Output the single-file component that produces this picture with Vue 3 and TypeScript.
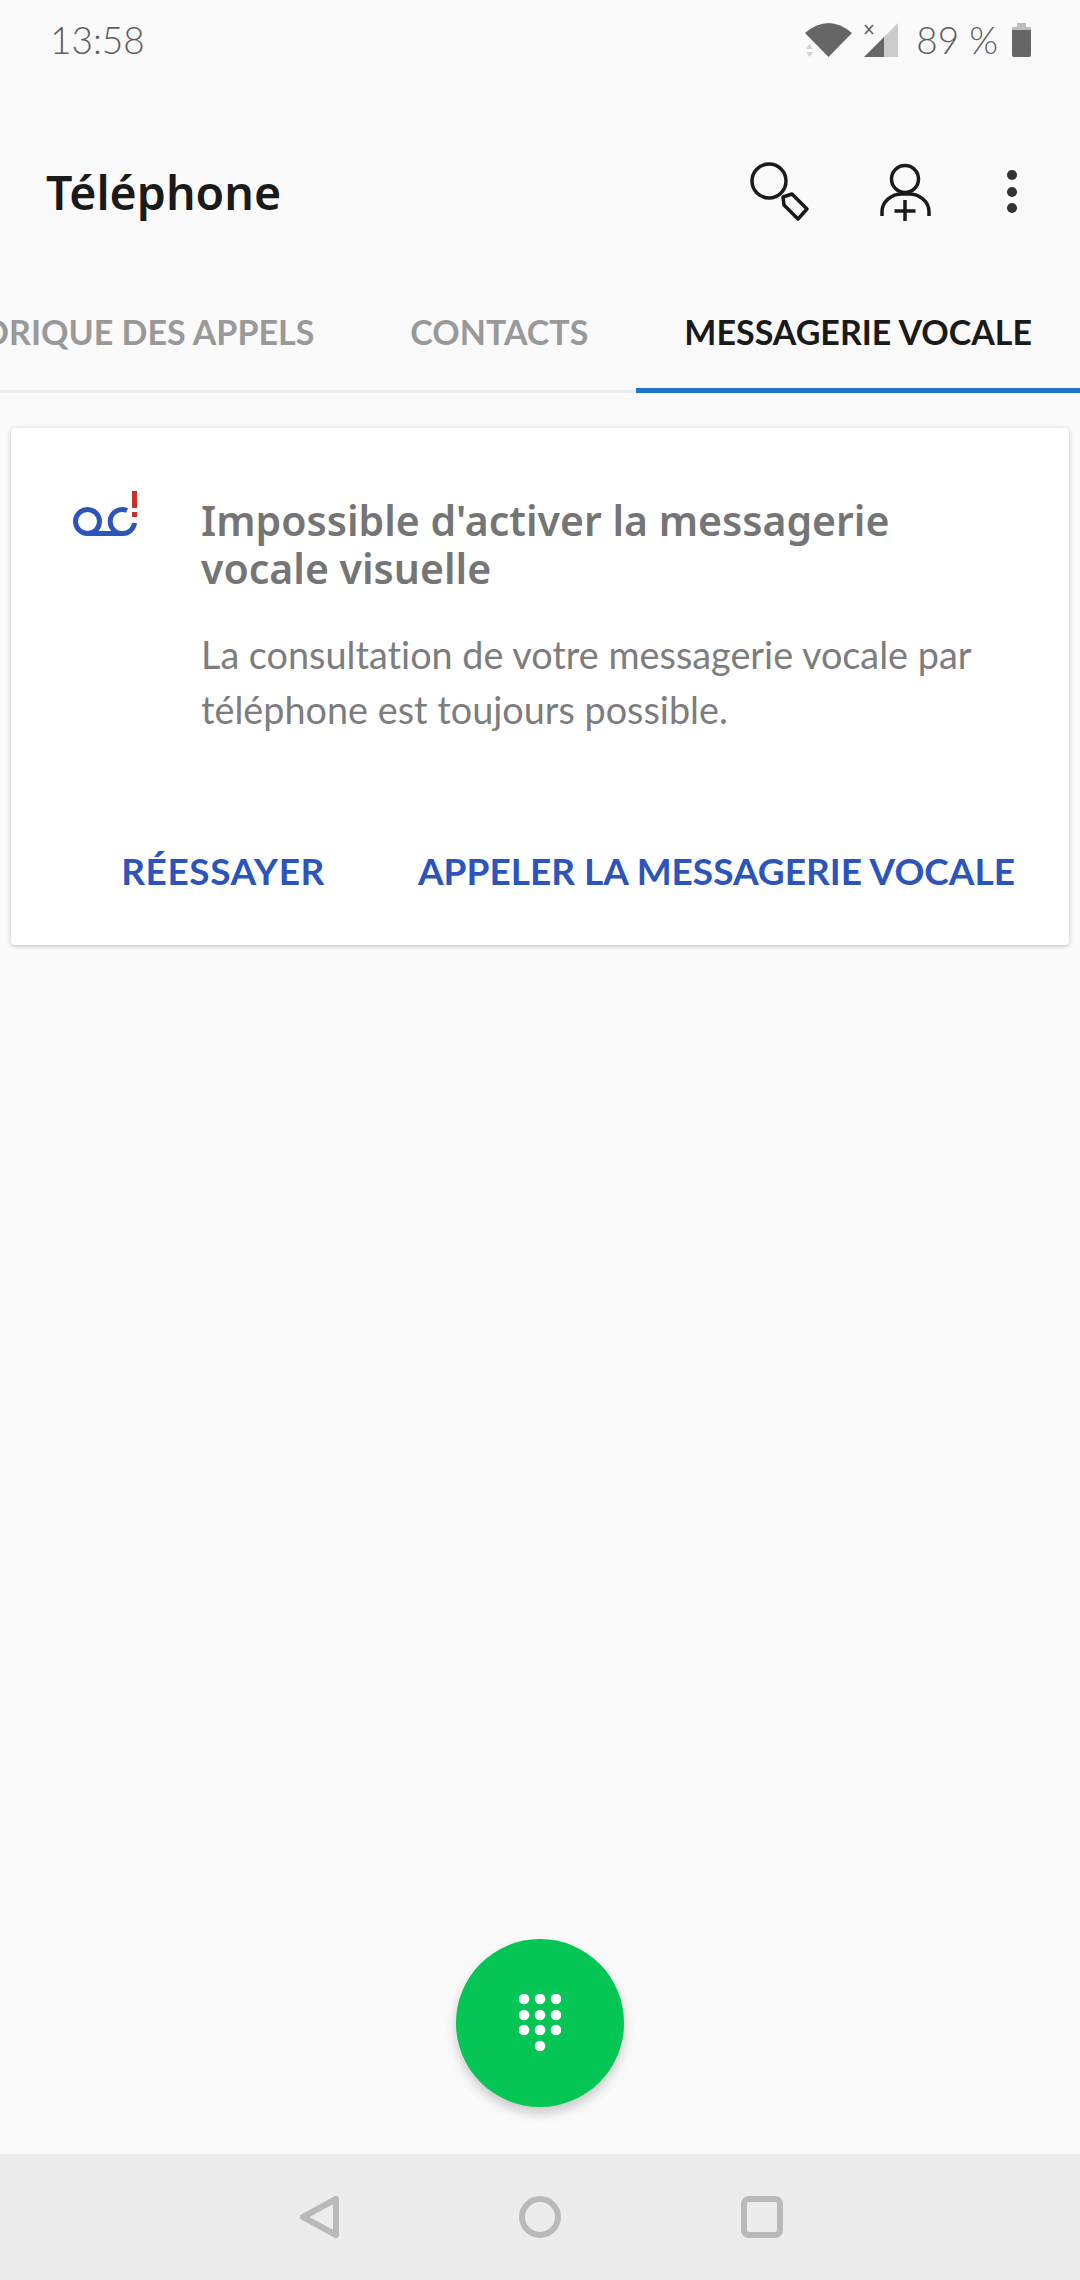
<script setup lang="ts">
const tabs = [
  { label: 'HISTORIQUE DES APPELS', active: false },
  { label: 'CONTACTS', active: false },
  { label: 'MESSAGERIE VOCALE', active: true },
]
const dialDots: [number, number][] = [
  [5, 5], [21, 5], [37, 5],
  [5, 21], [21, 21], [37, 21],
  [5, 36], [21, 36], [37, 36],
  [21, 52],
]
</script>

<template>
  <div class="phone">
    <div class="status">
      <span class="time">13:58</span>
      <div class="status-right">
        <svg width="47" height="34" viewBox="0 0 47 34">
          <path d="M0 10 Q23.500 -10 47 10 L23.500 34 Z" fill="#666" />
          <path d="M1 26 L4.500 21 L8 26 Z M1 29 L8 29 L4.500 34 Z" fill="#d4d4d4" />
        </svg>
        <svg class="ic-signal" width="34" height="34" viewBox="0 0 34 34">
          <path d="M34 0 V34 H20 V14 Z" fill="#cbcbcb" />
          <path d="M0 34 L20 14 V34 Z" fill="#666" />
          <path d="M1 2 L9 11 M9 2 L1 11" stroke="#666" stroke-width="1.800" fill="none" />
        </svg>
        <span class="batt-text">89 %</span>
        <svg width="19" height="34" viewBox="0 0 19 34">
          <path d="M5 0 H14 V4 H18 Q19 4 19 5 V7 H0 V5 Q0 4 1 4 H5 Z" fill="#bdbdbd" />
          <path d="M0 7 H19 V32 Q19 34 17 34 H2 Q0 34 0 32 Z" fill="#666" />
        </svg>
      </div>
    </div>

    <header class="toolbar">
      <h1 class="title">Téléphone</h1>
      <div class="actions">
        <svg class="ic-search" width="64" height="70" viewBox="0 0 64 70" fill="none" stroke="#1a1a1a" stroke-width="3.500">
          <circle cx="23" cy="24" r="17" />
          <path d="M37 40 L46 37 L61 52 L52 62 L38 48 Z" stroke-linejoin="round" />
        </svg>
        <svg class="ic-person" width="60" height="70" viewBox="0 0 60 70" fill="none" stroke="#1a1a1a" stroke-width="3.500">
          <circle cx="30" cy="22" r="13.500" />
          <path d="M7 59 V55 C7 44 17 37 27 37 H34 C44 37 54 44 54 55 V59" />
          <path d="M30 43 V64 M19.500 54 H40.500" />
        </svg>
        <svg class="ic-more" width="12" height="70" viewBox="0 0 12 70" fill="#333">
          <circle cx="6" cy="18" r="5" />
          <circle cx="6" cy="35" r="5" />
          <circle cx="6" cy="51" r="5" />
        </svg>
      </div>
    </header>

    <nav class="tabs">
      <div v-for="t in tabs" :key="t.label" class="tab" :class="{ active: t.active }">{{ t.label }}</div>
    </nav>

    <main class="content">
      <section class="card">
        <div class="card-row">
          <svg width="66" height="48" viewBox="0 0 66 48" fill="none">
            <circle cx="14.500" cy="30.500" r="12" stroke="#2b55bd" stroke-width="5" />
            <path d="M14.500 42.500 H49.500 M54 19.500 A12 12 0 1 0 49.500 42.500 A12 12 0 0 0 61.500 32" stroke="#2b55bd" stroke-width="5" />
            <rect x="59" y="0" width="5" height="17" fill="#c9302c" />
            <rect x="59" y="21" width="5" height="5" fill="#c9302c" />
          </svg>
          <div class="card-text">
            <h2>Impossible d'activer la messagerie vocale visuelle</h2>
            <p>La consultation de votre messagerie vocale par téléphone est toujours possible.</p>
          </div>
        </div>
        <div class="card-actions">
          <a class="retry">RÉESSAYER</a>
          <a>APPELER LA MESSAGERIE VOCALE</a>
        </div>
      </section>

      <button class="fab" aria-label="Clavier">
        <svg width="42" height="58" viewBox="0 0 42 58" fill="#fff">
          <circle v-for="(d, i) in dialDots" :key="i" :cx="d[0]" :cy="d[1]" r="5.300" />
        </svg>
      </button>
    </main>

    <footer class="navbar">
      <svg width="39" height="42" viewBox="0 0 39 42" fill="none" stroke="#b9b9b9" stroke-width="6" stroke-linejoin="round">
        <path d="M3 21 L36 3 V39 Z" />
      </svg>
      <svg width="42" height="42" viewBox="0 0 42 42" fill="none" stroke="#b9b9b9" stroke-width="6">
        <circle cx="21" cy="21" r="18" />
      </svg>
      <svg width="42" height="42" viewBox="0 0 42 42" fill="none" stroke="#b9b9b9" stroke-width="6">
        <rect x="3" y="3" width="36" height="36" rx="5" />
      </svg>
    </footer>
  </div>
</template>

<style scoped>
.phone {
  width: 1080px;
  height: 2280px;
  display: flex;
  flex-direction: column;
  background: #fafafa;
  font-family: Lato, sans-serif;
  font-variant-ligatures: none;
  overflow: hidden;
}
.status {
  height: 80px;
  flex: none;
  display: flex;
  justify-content: space-between;
  align-items: flex-start;
  padding: 23px 49px 0 50px;
  box-sizing: border-box;
  color: #5e5e5e;
}
.time,
.batt-text {
  font-weight: 300;
  font-size: 37px;
  line-height: 34px;
}
.status-right {
  display: flex;
  align-items: flex-start;
}
.ic-signal {
  margin-left: 12px;
}
.batt-text {
  margin: 0 14px 0 18px;
}
.toolbar {
  height: 224px;
  flex: none;
  display: flex;
  align-items: center;
  justify-content: space-between;
  padding-left: 46px;
}
.title {
  margin: 0;
  font-family: "Noto Sans", sans-serif;
  font-size: 46.500px;
  font-weight: 600;
  color: #1a1a1a;
}
.actions {
  display: flex;
  padding-right: 62px;
}
.ic-person {
  margin-left: 65px;
}
.ic-more {
  margin-left: 71px;
}
.tabs {
  height: 89px;
  flex: none;
  display: flex;
  justify-content: flex-end;
  border-bottom: 3px solid #ececec;
  box-sizing: border-box;
}
.tab {
  flex: none;
  padding: 0 48px;
  font-size: 34px;
  font-weight: 700;
  line-height: 56px;
  color: #999;
  height: 89px;
  box-sizing: border-box;
}
.tab.active {
  color: #1a1a1a;
  border-bottom: 5px solid #1a76c8;
}
.content {
  flex: 1;
  position: relative;
  padding: 35px 11px 0;
}
.card {
  background: #fff;
  border-radius: 4px;
  box-shadow: 0 1px 4px rgba(0, 0, 0, 0.25);
  padding: 63px 54px 52px 62px;
  height: 517px;
  box-sizing: border-box;
}
.card-row {
  display: flex;
  gap: 62px;
}
.card-text {
  padding-top: 5px;
  width: 800px;
}
.card-text h2 {
  margin: 0;
  font-family: "Noto Sans", sans-serif;
  font-size: 41px;
  line-height: 48px;
  font-weight: 600;
  color: #757575;
}
.card-text p {
  margin: 35px 0 0;
  font-size: 37.800px;
  line-height: 55px;
  font-weight: 400;
  color: #7d7d7d;
}
.card-actions {
  display: flex;
  justify-content: flex-end;
  gap: 93px;
  margin-top: 112px;
  font-size: 37px;
  line-height: 44px;
  font-weight: 700;
  color: #2b55bd;
}
.retry {
  letter-spacing: 0.6px;
}
.fab {
  position: absolute;
  left: 456px;
  bottom: 47px;
  width: 168px;
  height: 168px;
  border: none;
  padding: 0;
  border-radius: 50%;
  background: #05c655;
  box-shadow: 0 6px 12px rgba(0, 0, 0, 0.2);
  display: flex;
  align-items: center;
  justify-content: center;
}
.navbar {
  height: 126px;
  flex: none;
  background: #ececec;
  display: flex;
  align-items: center;
  justify-content: space-between;
  padding: 0 297px 0 300px;
}
</style>
